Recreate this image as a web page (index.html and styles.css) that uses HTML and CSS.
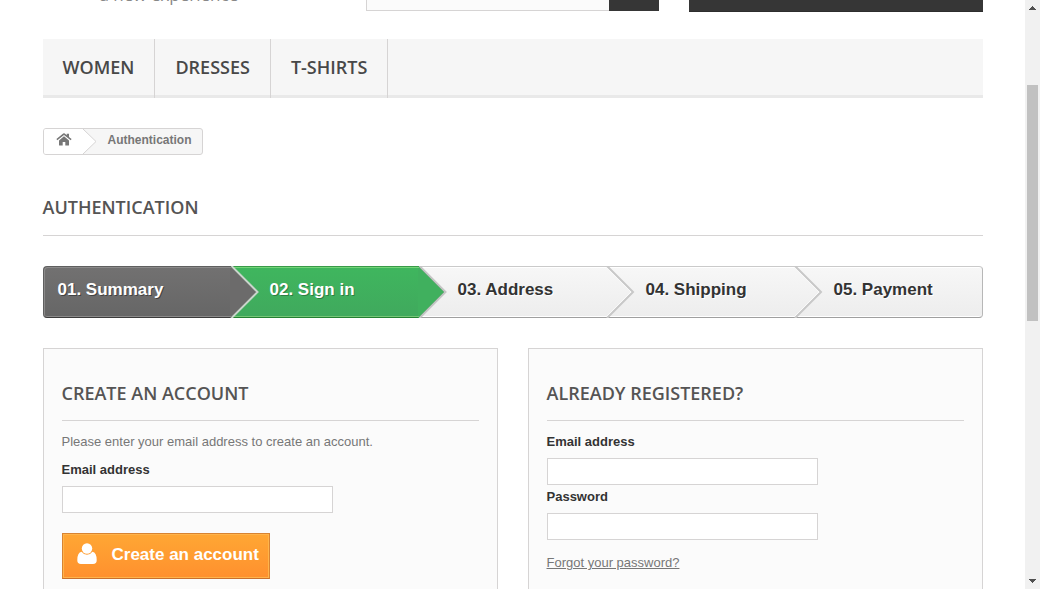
FILE: index.html
```html
<!DOCTYPE html>
<html lang="en">
<head>
<meta charset="utf-8">
<meta name="viewport" content="width=device-width, initial-scale=1">
<title>Authentication</title>
<link rel="stylesheet" href="styles.css">
</head>
<body>
<div class="viewport">
  <div class="page">
    <div class="container">
      <header class="header">
        <div class="logo">a new experience</div>
        <form class="search">
          <input class="search-input" type="text" aria-label="Search">
          <button class="search-button" type="button" aria-label="Search"></button>
        </form>
        <a class="cart" href="#" aria-label="Cart"></a>
      </header>

      <nav class="menu">
        <a class="menu-link" href="#">Women</a>
        <a class="menu-link" href="#">Dresses</a>
        <a class="menu-link" href="#">T-shirts</a>
      </nav>

      <nav class="breadcrumb" aria-label="Breadcrumb">
        <a class="crumb-home" href="#" aria-label="Home">
          <svg class="home-icon" width="16" height="13" viewBox="0 0 16 13"><path d="M8 3.200 13 7.400V12q0 .6-.6.6H9.300V8.900H6.700v3.700H3.600Q3 12.600 3 12V7.400zM7.200.6q.8-.7 1.600 0l1.900 1.600V.7h2.300v3.200l2.600 2.200-.9 1.200L8 1.900 1.300 7.300l-.9-1.200z"/></svg>
        </a>
        <svg class="crumb-arrow" width="14" height="25" viewBox="0 0 14 25"><path class="crumb-fill" d="M0 0 13 12.500 0 25z"/><path class="crumb-line" d="M0 0 13 12.500 0 25"/></svg>
        <span class="crumb-current">Authentication</span>
      </nav>

      <h1 class="heading">Authentication</h1>

      <ol class="steps">
        <li class="step step-done">01. Summary
          <svg class="step-arrow" width="30" height="52" viewBox="0 0 30 52"><path class="arrow-fill" d="M0 2H2L26 26 2 50H0z"/><path class="arrow-edge" d="M0 0 26 26 0 52"/><path class="arrow-gap" d="M1.500 0 27.500 26 1.500 52"/></svg>
        </li>
        <li class="step step-current">02. Sign in
          <svg class="step-arrow" width="30" height="52" viewBox="0 0 30 52"><path class="arrow-fill" d="M0 2H2L26 26 2 50H0z"/><path class="arrow-edge" d="M0 0 26 26 0 52"/><path class="arrow-gap" d="M1.500 0 27.500 26 1.500 52"/></svg>
        </li>
        <li class="step">03. Address
          <svg class="step-arrow" width="30" height="52" viewBox="0 0 30 52"><path class="arrow-gap" d="M-1 0 25 26-1 52"/><path class="arrow-edge" d="M1 0 27 26 1 52"/></svg>
        </li>
        <li class="step">04. Shipping
          <svg class="step-arrow" width="30" height="52" viewBox="0 0 30 52"><path class="arrow-gap" d="M-1 0 25 26-1 52"/><path class="arrow-edge" d="M1 0 27 26 1 52"/></svg>
        </li>
        <li class="step">05. Payment</li>
      </ol>

      <div class="columns">
        <form class="box">
          <h2 class="heading">Create an account</h2>
          <p class="note">Please enter your email address to create an account.</p>
          <label class="label" for="new-email">Email address</label>
          <input class="input" id="new-email" type="text">
          <button class="button" type="button">
            <svg width="20" height="22" viewBox="0 0 20 22"><circle cx="10" cy="5.500" r="5.200"/><path d="M4.600 8.800Q6.700 11.800 10 11.800T15.400 8.800Q19.700 9.600 19.700 17.200 19.700 21 16 21H4Q.3 21 .3 17.200.3 9.600 4.600 8.800z"/></svg>
            <span>Create an account</span>
          </button>
        </form>
        <form class="box">
          <h2 class="heading">Already registered?</h2>
          <label class="label" for="email">Email address</label>
          <input class="input" id="email" type="text">
          <label class="label" for="password">Password</label>
          <input class="input" id="password" type="password">
          <a class="forgot" href="#">Forgot your password?</a>
        </form>
      </div>
    </div>
  </div>
  <div class="scrollbar" aria-hidden="true">
    <svg width="7" height="4" viewBox="0 0 7 4"><path d="M3 0H4V1H5V2H6V3H7V4H0V3H1V2H2V1H3z"/></svg>
    <div class="track"><div class="thumb"></div></div>
    <svg width="7" height="4" viewBox="0 0 7 4"><path d="M0 0H7V1H6V2H5V3H4V4H3V3H2V2H1V1H0z"/></svg>
  </div>
</div>
</body>
</html>
```
FILE: styles.css
```css
* { box-sizing: border-box; }

body {
  margin: 0;
  background: #fff;
  color: #777;
  font: 13px/18px Arial, "Liberation Sans", sans-serif;
}

.viewport {
  display: flex;
  height: 100vh;
  overflow: hidden;
}

.page {
  flex: 1;
  min-width: 0;
  overflow: hidden;
}

.container {
  max-width: 940px;
  margin: 0 auto;
}

/* Header */
.header {
  display: grid;
  grid-template-columns: 1fr 293px 294px;
  column-gap: 30px;
  align-items: start;
  height: 12px;
  margin-bottom: 27px;
}

.logo {
  margin-top: -17px;
  padding-left: 57px;
  color: #888;
  font: 17px/24px "Open Sans", sans-serif;
}

.search {
  display: flex;
  height: 11px;
}

.search-input {
  flex: 1;
  min-width: 0;
  padding: 0 12px;
  border: 1px solid #d6d4d4;
  border-width: 0 0 1px 1px;
  background: #fbfbfb;
}

.search-button {
  width: 50px;
  border: 0;
  background: #363636;
}

.cart {
  height: 12px;
  border-bottom: 1px solid #2d2d2d;
  background: #363636;
}

/* Main menu */
.menu {
  display: flex;
  border-bottom: 3px solid #e9e9e9;
  background: #f6f6f6;
}

.menu-link {
  margin-bottom: -3px;
  padding: 17px 20px 20px;
  border-right: 1px solid #d6d4d4;
  color: #484848;
  font: 600 18px/22px "Open Sans", sans-serif;
  text-decoration: none;
  text-transform: uppercase;
}

/* Breadcrumb */
.breadcrumb {
  display: inline-flex;
  height: 27px;
  margin: 30px 0 41px;
  border: 1px solid #d6d4d4;
  border-radius: 3px;
  background: #f6f6f6;
  overflow: hidden;
  font-size: 12px;
  font-weight: bold;
  line-height: 22px;
  vertical-align: top;
}

.crumb-home {
  display: flex;
  width: 39px;
  padding: 4px 0 0 12px;
  background: #fff;
}

.home-icon { fill: #777; }
.crumb-fill { fill: #fff; }
.crumb-line { fill: none; stroke: #d6d4d4; }
.crumb-current { padding: 0 10px 0 11px; }

.heading {
  margin: 0;
  padding-bottom: 17px;
  border-bottom: 1px solid #d6d4d4;
  color: #555454;
  font: 600 18px/22px "Open Sans", sans-serif;
  text-transform: uppercase;
}

/* Order steps */
.steps {
  display: grid;
  grid-template-columns: repeat(5, 1fr);
  margin: 30px 0;
  padding: 0;
  list-style: none;
}

.step {
  position: relative;
  height: 52px;
  padding: 12px 0 0 39px;
  border: 1px solid #cacaca;
  border-width: 1px 0;
  border-bottom-color: #9f9f9f;
  background: linear-gradient(#f7f7f7, #ededed);
  box-shadow: inset 0 1px #fff, inset 0 -1px #fff;
  color: #333;
  font-size: 17px;
  font-weight: bold;
  line-height: 22px;
  text-shadow: 1px 1px #fff;
}

.step:last-child {
  border-right: 1px solid #b7b7b7;
  border-radius: 0 4px 4px 0;
}

.step-done {
  padding-left: 14px;
  border-color: #5f5f5f;
  border-bottom-color: #3b3b3b;
  border-left-width: 1px;
  border-radius: 4px 0 0 4px;
  background: linear-gradient(#727171, #666);
  box-shadow: inset 1px 1px #8b8a8a, inset 0 -1px #8b8a8a;
  color: #fff;
  text-shadow: 1px 1px rgba(0, 0, 0, 0.4);
}

.step-current {
  border-color: #399b49;
  border-bottom-color: #247f32;
  background: linear-gradient(#3fb65e, #40a95d);
  box-shadow: inset 0 1px #74d578, inset 0 -1px #74c776;
  color: #fff;
  text-shadow: 1px 1px rgba(0, 0, 0, 0.3);
}

.step-arrow {
  position: absolute;
  top: -1px;
  left: calc(100% - 1px);
  z-index: 1;
}

.arrow-edge { fill: none; stroke: #c8c8c8; stroke-width: 2; }
.arrow-gap { fill: none; stroke: #fff; }
.step-done .arrow-fill { fill: #6c6b6b; }
.step-done .arrow-edge { stroke: #5a5a5a; stroke-width: 1; }
.step-done .arrow-gap { stroke: #c9d4cb; stroke-width: 2; }
.step-current .arrow-fill { fill: #40b05e; }
.step-current .arrow-edge { stroke: #2f9c4c; stroke-width: 1; }
.step-current .arrow-gap { stroke: #c4c4c4; stroke-width: 2; }

/* Forms */
.columns {
  display: grid;
  grid-template-columns: 1fr 1fr;
  gap: 30px;
}

.box {
  min-height: 290px;
  padding: 33px 18px 20px;
  border: 1px solid #d6d4d4;
  background: #fbfbfb;
}

.box .heading {
  margin-bottom: 12px;
  padding-bottom: 16px;
}

.note { margin: 0 0 10px; }

.label {
  display: block;
  margin-bottom: 7px;
  color: #333;
  font-weight: bold;
}

.input {
  display: block;
  width: 271px;
  max-width: 100%;
  height: 27px;
  margin-bottom: 3px;
  padding: 3px 5px;
  border: 1px solid #d6d4d4;
  background: #fff;
}

.button {
  display: flex;
  gap: 15px;
  height: 46px;
  margin-top: 20px;
  padding: 9px 10px 0 14px;
  border: 1px solid #d88332;
  border-bottom-color: #c9702d;
  background: linear-gradient(#ffa734, #ff902e);
  box-shadow: inset 0 0 0 1px #ffb44b;
  color: #fff;
  font: bold 17px/24px Arial, "Liberation Sans", sans-serif;
}

.button svg { fill: #fff; }

.forgot {
  display: inline-block;
  margin-top: 11px;
  color: #777;
  text-decoration: underline;
}

/* Scrollbar */
.scrollbar {
  display: flex;
  flex-direction: column;
  align-items: center;
  width: 15px;
  padding: 6px 0;
  background: #f1f1f1;
}

.scrollbar svg { fill: #505050; }

.track {
  flex: 1;
  padding-top: 75px;
}

.thumb {
  width: 11px;
  height: 236px;
  background: #c1c1c1;
}
```
